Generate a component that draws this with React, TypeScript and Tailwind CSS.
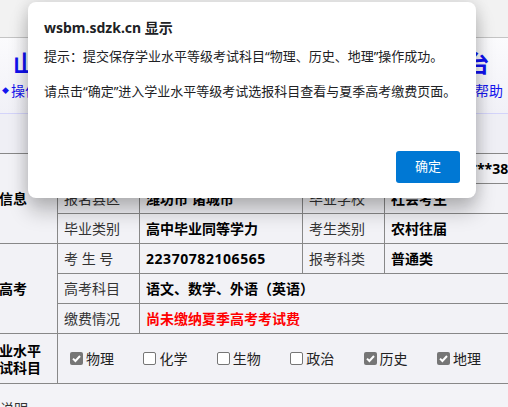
import React from "react";

function Box({ checked }: { checked: boolean }) {
  return checked ? (
    <span className="w-[13px] h-[13px] rounded-[2px] bg-[#767676] flex items-center justify-center shrink-0">
      <svg width="11" height="11" viewBox="0 0 11 11">
        <path d="M2 5.6 L4.4 8 L9 3" stroke="#fff" strokeWidth="2" fill="none" />
      </svg>
    </span>
  ) : (
    <span className="w-[13px] h-[13px] rounded-[2px] bg-white border border-[#767676] shrink-0" />
  );
}

const subjects: [string, boolean][] = [
  ["物理", true],
  ["化学", false],
  ["生物", false],
  ["政治", false],
  ["历史", true],
  ["地理", true],
];

export default function App() {
  const cell = "border-r border-b border-[#888] bg-[#f2f2f6] flex items-center";
  const label = cell + " pl-[6px] text-[#333]";
  const value = cell + " pl-[6px] font-bold";
  return (
    <div className="relative w-[508px] h-[407px] overflow-hidden bg-[#f3f3f7] text-[14px] text-black font-['Noto_Sans','Noto_Sans_CJK_SC',sans-serif]">
      <div className="h-[38px] bg-[#f2f2f2] border-b border-[#c4c4c4]" />
      <div className="h-[76px] bg-gradient-to-b from-[#fbfbfd] to-[#f1f1f7] border-b border-[#d4d4fa] flex flex-col">
        <div className="pl-[13px] pt-[11px] h-[42px] text-[22.7px] leading-[30px] font-bold text-[#1010f0] whitespace-nowrap">
          山东省普通高中学业水平等级考试网上报名平台
        </div>
        <div className="flex justify-between pl-[2px] pr-[5px] text-[#1515ee] leading-[20px] mt-[1px]">
          <span className="flex items-center">
            <span className="text-[7px] mr-[2px]">◆</span>操作说明
          </span>
          <span className="flex items-center">
            <span className="text-[7px] mr-[2px]">◆</span>系统帮助
          </span>
        </div>
      </div>
      <div className="h-[39px] bg-[#efeff5]" />
      <div className="ml-[-59px] w-[660px] border-t border-[#888] grid grid-cols-[117px_82px_163px_82px_216px] grid-rows-[30px_30px_30px_30px_30px_30px_50px]">
        <div className={cell + " row-span-3 justify-center font-bold bg-[#e9e9f9]"}>考生信息</div>
        <div className={label}>姓　　名</div>
        <div className={value}>张**</div>
        <div className={label}>身份证号</div>
        <div className={value}>370782*******385X</div>

        <div className={label}>报名县区</div>
        <div className={value}>潍坊市 诸城市</div>
        <div className={label}>毕业学校</div>
        <div className={value}>社会考生</div>

        <div className={label}>毕业类别</div>
        <div className={value}>高中毕业同等学力</div>
        <div className={label}>考生类别</div>
        <div className={value}>农村往届</div>

        <div className={cell + " row-span-3 justify-center font-bold bg-[#e9e9f9]"}>夏季高考</div>
        <div className={label}>考 生 号</div>
        <div className={value + " tracking-[0.55px]"}>22370782106565</div>
        <div className={label}>报考科类</div>
        <div className={value}>普通类</div>

        <div className={label}>高考科目</div>
        <div className={value + " col-span-3"}>语文、数学、外语（英语）</div>

        <div className={label}>缴费情况</div>
        <div className={value + " col-span-3 text-[#ff0000]"}>尚未缴纳夏季高考考试费</div>

        <div className={cell + " justify-center text-center font-bold leading-[17px] bg-[#e9e9f9]"}>
          高中学业水平
          <br />
          等级考试科目
        </div>
        <div className={cell + " col-span-4 pl-[12px]"}>
          {subjects.map(([name, on]) => (
            <div key={name} className="w-[73.4px] flex items-center gap-[3px] shrink-0 text-[#222]">
              <Box checked={on} />
              <span>{name}</span>
            </div>
          ))}
        </div>
      </div>
      <div className="mt-[14px] ml-[-28px] text-[#333]">报名说明</div>

      <div className="absolute left-[28px] top-[2px] w-[448px] h-[196px] bg-white rounded-[8px] shadow-[0_0_16px_rgba(0,0,0,0.14),0_14px_20px_rgba(0,0,0,0.22)] flex flex-col px-[16px] pt-[16px] pb-[15px] text-[#202124]">
        <div className="text-[14px] leading-[20px] font-bold">wsbm.sdzk.cn 显示</div>
        <div className="mt-[10px] text-[13px] leading-[17.5px] whitespace-pre-line">
          {"提示：提交保存学业水平等级考试科目\u201c物理、历史、地理\u201d操作成功。\n\n请点击\u201c确定\u201d进入学业水平等级考试选报科目查看与夏季高考缴费页面。"}
        </div>
        <div className="mt-auto flex justify-end">
          <button className="w-[64px] h-[32px] rounded-[3px] bg-[#0078d4] text-white text-[13px]">确定</button>
        </div>
      </div>
    </div>
  );
}
